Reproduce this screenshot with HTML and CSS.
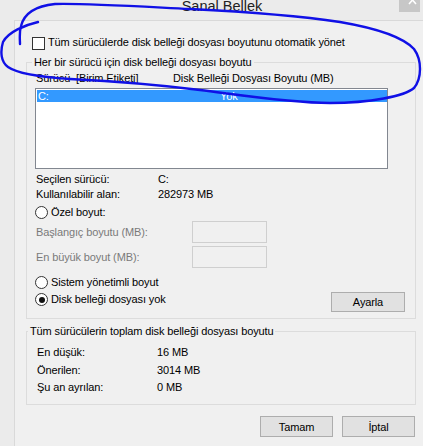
FILE: index.html
```html
<!DOCTYPE html>
<html lang="tr">
<head>
  <meta charset="UTF-8">
  <meta name="viewport" content="width=device-width, initial-scale=1.0">
  <title>Sanal Bellek</title>
  <link rel="stylesheet" href="styles.css">
</head>
<body>

<div class="titlebar">
  <div class="title">Sanal Bellek</div>
  <div class="close">
    <svg width="21" height="12" viewBox="0 0 21 12">
      <path d="M10 -4 L17 4 M17 -4 L10 4" stroke="#fff" stroke-width="1.6" fill="none" />
    </svg>
  </div>
</div>

<div class="client">
  <div class="check-row"><span class="checkbox"></span>Tüm sürücülerde disk belleği dosyası boyutunu otomatik yönet</div>

  <fieldset class="group drives">
    <legend>Her bir sürücü için disk belleği dosyası boyutu</legend>

    <div class="list-head">
      <span>Sürücü&nbsp; [Birim Etiketi]</span>
      <span>Disk Belleği Dosyası Boyutu (MB)</span>
    </div>
    <div class="listbox">
      <div class="list-item selected"><span>C:</span><span>Yok</span></div>
    </div>

    <div class="info">
      <span>Seçilen sürücü:</span><span>C:</span>
      <span>Kullanılabilir alan:</span><span>282973 MB</span>
    </div>

    <div class="radio-row custom"><span class="radio"></span>Özel boyut:</div>
    <div class="size-row first"><span class="muted">Başlangıç boyutu (MB):</span><span class="textbox"></span></div>
    <div class="size-row"><span class="muted">En büyük boyut (MB):</span><span class="textbox"></span></div>
    <div class="radio-row system"><span class="radio"></span>Sistem yönetimli boyut</div>
    <div class="last-row">
      <div class="radio-row"><span class="radio checked"></span>Disk belleği dosyası yok</div>
      <button class="btn set">Ayarla</button>
    </div>
  </fieldset>

  <fieldset class="group totals">
    <legend>Tüm sürücülerin toplam disk belleği dosyası boyutu</legend>
    <div class="totals-grid">
      <span>En düşük:</span><span>16 MB</span>
      <span>Önerilen:</span><span>3014 MB</span>
      <span>Şu an ayrılan:</span><span>0 MB</span>
    </div>
  </fieldset>

  <div class="actions">
    <button class="btn">Tamam</button>
    <button class="btn">İptal</button>
  </div>
</div>

<!-- hand drawn marker around the top options -->
<svg class="annotation" width="423" height="446" viewBox="0 0 423 446">
  <path d="M38,22 C25,25 8,32 3,42 C0,52 1,62 8,67 C18,74 40,77 70,79 C110,81 160,85 200,90 C240,95 290,103 330,103 C370,103 405,96 414,88 C422,78 422,60 414,49 C402,36 375,28 340,22 C300,16 250,12 190,9 C130,6 80,3 55,4 C35,6 24,14 21,26 C19,33 20,40 20,44"
        fill="none" stroke="#1010e6" stroke-width="2.4" stroke-linecap="round" stroke-linejoin="round" />
</svg>

</body>
</html>
```

FILE: styles.css
```css
* {
  box-sizing: border-box;
}

body {
  margin: 0;
  width: 423px;
  height: 446px;
  overflow: hidden;
  position: relative;
  background-color: #ebebeb;
  font-family: "Liberation Sans", Arial, sans-serif;
  font-size: 11px;
  line-height: 15px;
  letter-spacing: -0.12px;
  color: #000;
}

/* window frame */
.titlebar {
  display: flex;
  height: 20px;
}

.title {
  flex: 1;
  padding-left: 45px;
  text-align: center;
  font-size: 14.5px;
  line-height: 13px;
  letter-spacing: 0;
  color: #222;
}

.close {
  width: 21px;
  height: 12px;
  margin-right: 3px;
  background-color: #c7c7c7;
}

.close svg {
  display: block;
}

.client {
  height: 426px;
  margin-left: 14px;
  padding: 14px 0 0 11px;
  border-left: 1px solid #d9d9d9;
  border-top: 1px solid #d9d9d9;
  background-color: #f0f0f0;
}

/* checkbox row */
.check-row {
  display: flex;
  align-items: flex-start;
  padding-left: 6px;
}

.checkbox {
  width: 13px;
  height: 13px;
  margin: 2px 3px 0 0;
  border: 1px solid #333;
  background-color: #fff;
}

/* group boxes */
.group {
  width: 390px;
  margin: 5px 0 0 0;
  padding: 1px 10px 6px 8px;
  border: 1px solid #dcdcdc;
  min-inline-size: 0;
}

.group legend {
  padding: 0 2px;
  margin-left: -3px;
  line-height: 15px;
}

.list-head {
  display: grid;
  grid-template-columns: 137px auto;
  padding-left: 1px;
}

.listbox {
  width: 353px;
  height: 81px;
  margin-top: 2px;
  padding: 1px 0 0 1px;
  border: 1px solid #828790;
  background-color: #fff;
}

.list-item {
  display: grid;
  grid-template-columns: 182px auto;
  height: 12px;
  padding-left: 1px;
  line-height: 12px;
}

.list-item.selected {
  background-color: #3399ff;
  color: #fff;
}

.info {
  display: grid;
  grid-template-columns: 122px auto;
  margin-top: 3px;
  padding-left: 1px;
}

/* radio buttons */
.radio-row {
  display: flex;
  align-items: center;
  height: 15px;
}

.radio-row.custom {
  margin-top: 3px;
}

.radio-row.system {
  margin-top: 7px;
}

.radio {
  display: flex;
  align-items: center;
  justify-content: center;
  width: 13px;
  height: 13px;
  margin-right: 3px;
  border: 1px solid #333;
  border-radius: 50%;
  background-color: #fff;
}

.radio.checked::after {
  content: "";
  width: 6px;
  height: 6px;
  border-radius: 50%;
  background-color: #111;
}

/* disabled size fields */
.size-row {
  display: grid;
  grid-template-columns: 157px 75px;
  align-items: center;
  height: 22px;
  margin-top: 3px;
}

.size-row.first {
  margin-top: 1px;
}

.muted {
  padding-left: 1px;
  color: #7a7a7a;
}

.textbox {
  height: 22px;
  border: 1px solid #cfcfcf;
  background-color: #f0f0f0;
}

.last-row {
  display: flex;
  justify-content: space-between;
  align-items: flex-start;
  margin-top: 2px;
}

.btn {
  width: 73px;
  height: 21px;
  padding: 0;
  border: 1px solid #adadad;
  background-color: #e1e1e1;
  font-family: "Liberation Sans", Arial, sans-serif;
  font-size: 11px;
  letter-spacing: -0.12px;
  color: #000;
}

.btn.set {
  width: 74px;
  height: 20px;
}

/* totals */
.group.totals {
  padding: 5px 10px 7.5px 10px;
}

.group.totals legend {
  margin-left: -9px;
}

.totals-grid {
  display: grid;
  grid-template-columns: 120px auto;
  line-height: 17.5px;
}

.actions {
  display: flex;
  justify-content: flex-end;
  gap: 9px;
  width: 390px;
  margin-top: 11px;
  padding-right: 1px;
}

.annotation {
  position: absolute;
  top: 0;
  left: 0;
  pointer-events: none;
}
```
